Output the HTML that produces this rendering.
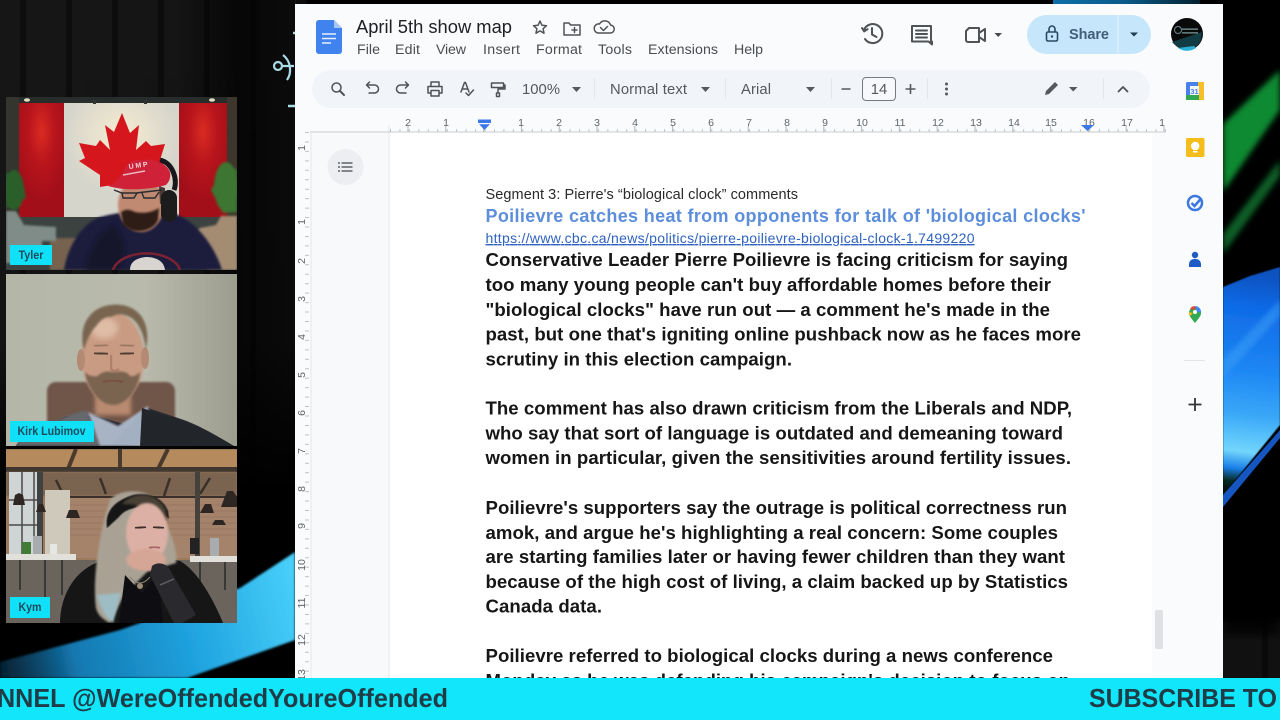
<!DOCTYPE html>
<html><head><meta charset="utf-8"><title>April 5th show map</title>
<style>
html,body{margin:0;padding:0;background:#000;width:1280px;height:720px;overflow:hidden}
svg{display:block;position:absolute;left:0;top:0}
text{font-family:"Liberation Sans",Arial,sans-serif}
.b{font-weight:700;font-size:18.6px;fill:#141414}
.m{font-size:14.2px;fill:#4a4d50}
.t{font-size:14.8px;fill:#55585c}
.r{font-size:10.5px;fill:#5f6368;text-anchor:middle}
.i{fill:none;stroke:#505356;stroke-width:1.500;stroke-linecap:round;stroke-linejoin:round}
.n{font-weight:700;font-size:11.500px;fill:#1b4b5c}
</style></head><body>
<svg width="1280" height="720" viewBox="0 0 1280 720">
<defs>
<pattern id="curt" width="46" height="10" patternUnits="userSpaceOnUse">
<rect width="46" height="10" fill="#131313"/>
<rect x="4" width="9" height="10" fill="#161616"/><rect x="20" width="6" height="10" fill="#0f0f0f"/><rect x="32" width="9" height="10" fill="#171717"/>
</pattern>
<linearGradient id="curfade" x1="0" y1="0" x2="0" y2="1"><stop offset="0" stop-color="#000" stop-opacity="0"/><stop offset=".6" stop-color="#000" stop-opacity=".1"/><stop offset=".88" stop-color="#000"/><stop offset="1" stop-color="#000"/></linearGradient>
<linearGradient id="curfadeR" x1="0" y1="0" x2="1" y2="0"><stop offset="0" stop-color="#000" stop-opacity="0"/><stop offset=".6" stop-color="#000" stop-opacity=".05"/><stop offset=".8" stop-color="#000" stop-opacity=".7"/><stop offset="1" stop-color="#000" stop-opacity=".5"/></linearGradient>
<linearGradient id="streak" gradientUnits="userSpaceOnUse" x1="0" y1="672" x2="295" y2="600"><stop offset="0" stop-color="#0c4a70" stop-opacity=".45"/><stop offset=".25" stop-color="#1478b0"/><stop offset=".65" stop-color="#20a4e0"/><stop offset="1" stop-color="#46cdf8"/></linearGradient>
<linearGradient id="topb" x1="0" x2="1" y1="0" y2="0"><stop offset="0" stop-color="#0c6fa8"/><stop offset=".5" stop-color="#0a5a88"/><stop offset="1" stop-color="#04202e"/></linearGradient>
<linearGradient id="blueR" gradientUnits="userSpaceOnUse" x1="1262" y1="275" x2="1236" y2="490"><stop offset="0" stop-color="#0b52c0"/><stop offset=".15" stop-color="#0f6ae6"/><stop offset=".45" stop-color="#1e88f4"/><stop offset=".65" stop-color="#3aa8f8"/><stop offset=".82" stop-color="#72d6fc"/><stop offset=".9" stop-color="#1a7fe8"/><stop offset=".96" stop-color="#062a22"/><stop offset="1" stop-color="#04140f"/></linearGradient>
<linearGradient id="wallK" x1="0" x2="1" y1="0" y2="0"><stop offset="0" stop-color="#b4b7a8"/><stop offset=".6" stop-color="#b9baac"/><stop offset="1" stop-color="#9c9d8e"/></linearGradient>
<radialGradient id="glow" cy=".3"><stop offset="0" stop-color="#f6ecd0"/><stop offset="1" stop-color="#d6d5cc"/></radialGradient>
<radialGradient id="redg" cy=".25" r=".6"><stop offset="0" stop-color="#d92b22"/><stop offset=".5" stop-color="#b8141c"/><stop offset="1" stop-color="#a30f19"/></radialGradient>
<filter id="f05"><feGaussianBlur stdDeviation=".35"/></filter>
<filter id="f07"><feGaussianBlur stdDeviation=".6"/></filter>
<filter id="f1"><feGaussianBlur stdDeviation="1"/></filter>
<filter id="f2"><feGaussianBlur stdDeviation="2.200"/></filter>
<filter id="f3"><feGaussianBlur stdDeviation="3"/></filter>
<filter id="f4"><feGaussianBlur stdDeviation="5"/></filter>
<clipPath id="cT"><rect x="6" y="97" width="231" height="173"/></clipPath>
<clipPath id="cK"><rect x="6" y="274" width="231" height="172"/></clipPath>
<clipPath id="cY"><rect x="6" y="449" width="231" height="174"/></clipPath>
<clipPath id="cDoc"><rect x="295" y="4" width="928" height="674"/></clipPath>
<clipPath id="cR"><rect x="1223" y="0" width="57" height="678"/></clipPath>
</defs>

<!-- backdrop -->
<rect width="1280" height="720" fill="#000"/>
<rect x="-10" y="-10" width="315" height="570" fill="url(#curt)" filter="url(#f3)"/>
<rect x="0" y="0" width="295" height="565" fill="url(#curfade)"/>
<rect x="0" y="0" width="295" height="565" fill="url(#curfadeR)"/>
<polygon points="0,662 120,630 240,588 295,552 295,640 187,678 0,678" fill="url(#streak)" filter="url(#f1)"/>
<!-- anchor-like glyph -->
<g fill="none" stroke="#a9dbe6" stroke-width="2.200" filter="url(#f05)">
<circle cx="278" cy="66" r="4"/><path d="M283 55c8 6 9 18 4 25M282 66h12"/><path d="M293 33h3M288 106h7" stroke-width="2.600"/>
</g>
<rect x="1053" y="0" width="147" height="4" fill="url(#topb)"/>
<rect x="1223" y="4" width="57" height="674" fill="#000"/>
<!-- right streaks -->
<g clip-path="url(#cR)">
<polygon points="1223,124 1280,70 1280,110 1223,192" fill="#0c8a33" filter="url(#f3)"/>
<polygon points="1223,234 1280,160 1280,176 1223,254" fill="#095e25" filter="url(#f3)"/>
<polygon points="1223,287 1250,276 1280,267 1280,425 1223,495" fill="url(#blueR)" filter="url(#f07)"/>
<polygon points="1223,360 1280,300 1280,316 1223,378" fill="#3da0f8" opacity=".5" filter="url(#f2)"/>
<polygon points="1223,495 1280,430 1280,438 1223,507" fill="#1657c0" filter="url(#f05)"/>
<rect x="1213" y="620" width="77" height="68" fill="url(#curt)" opacity=".8" filter="url(#f3)"/>
<rect x="1223" y="590" width="57" height="45" fill="#000" opacity=".8" filter="url(#f4)"/>
</g>

<!-- DOC WINDOW -->
<g clip-path="url(#cDoc)">
<rect x="295" y="4" width="928" height="674" fill="#f9fbfd"/>
<!-- doc icon -->
<path d="M319 20h15l8 8v23a3 3 0 0 1-3 3h-20a3 3 0 0 1-3-3V23a3 3 0 0 1 3-3z" fill="#3f83ee" filter="url(#f05)"/>
<path d="M334 20l8 8h-8z" fill="#a7c5f7"/>
<path d="M322 34h14M322 38.500h14M322 43h9" stroke="#e8f0fd" stroke-width="1.600"/>

<text x="356" y="33" font-size="18" fill="#202124" textLength="156" lengthAdjust="spacingAndGlyphs">April 5th show map</text>
<path class="i" d="M540 21l1.900 4.200 4.600.5-3.400 3 .9 4.500-4-2.300-4 2.300.9-4.500-3.400-3 4.600-.5z"/>
<path class="i" d="M564 23h5l1.500 2H580v10h-16zM572 30h5M574.500 27.500v5"/>
<path class="i" d="M598 33h12a4 4 0 0 0 .5-8 6 6 0 0 0-11-1 4.500 4.500 0 0 0-1.500 9zM600.500 27.500l3 3 4-4"/>

<text x="357" y="54" class="m" textLength="23">File</text>
<text x="395" y="54" class="m" textLength="25">Edit</text>
<text x="436" y="54" class="m" textLength="30">View</text>
<text x="483" y="54" class="m" textLength="37">Insert</text>
<text x="536" y="54" class="m" textLength="46">Format</text>
<text x="598" y="54" class="m" textLength="34">Tools</text>
<text x="648" y="54" class="m" textLength="70">Extensions</text>
<text x="734" y="54" class="m" textLength="29">Help</text>

<!-- right header icons -->
<path class="i" style="stroke-width:2" d="M864 30a9.500 9.500 0 1 1 1 9M862 28l2.200 3.400 3.400-2.200M872 28v6.500l4.500 2.500"/>
<path class="i" style="stroke-width:2" d="M912 26h19v15.500h1v3l-3.500-3H912zM916 30.500h11M916 34h11M916 37.500h11"/>
<path class="i" style="stroke-width:2" d="M969 28h10v14h-11a2 2 0 0 1-2-2v-9zM979 33l6-4v12l-6-4"/>
<polygon points="994.500,33 1002,33 998.200,37" fill="#474a4d"/>

<rect x="1027" y="15" width="124" height="39" rx="19.500" fill="#c6e6fb"/>
<rect x="1117.500" y="15" width="1" height="39" fill="#e6f4fd"/>
<g fill="none" stroke="#2a4a62" stroke-width="1.600"><rect x="1046.500" y="32" width="11" height="9" rx="1.500"/><path d="M1049 32v-3a3 3 0 0 1 6 0v3"/></g><circle cx="1052" cy="36.500" r="1.200" fill="#2a4a62"/>
<text x="1069" y="39" font-size="14.500" font-weight="700" fill="#33506a" textLength="40" opacity=".9">Share</text>
<polygon points="1130,32.500 1138,32.500 1134,36.500" fill="#1d3b52"/>

<circle cx="1187" cy="34" r="16" fill="#0a0a0a"/>
<path d="M1172 42l30-10-1 8a16 16 0 0 1-26 5z" fill="#123c44"/>
<path d="M1178 48a16 16 0 0 0 18 0l-2-2z" fill="#2bb0d8"/>
<path d="M1182 29h16M1182 33h16" stroke="#7d9a9e" stroke-width="1.500" filter="url(#f05)"/>
<circle cx="1178" cy="30" r="3.500" fill="none" stroke="#6b8a8e"/>

<!-- toolbar -->
<rect x="312" y="70" width="838" height="38" rx="19" fill="#f1f4f9"/>
<circle cx="336.500" cy="87.500" r="4.500" class="i"/><path class="i" style="stroke-width:2" d="M340 91l4 4"/>
<path class="i" d="M367 85h7.500a3.500 3.500 0 0 1 0 8H369M369.500 82l-3 3 3 3"/>
<path class="i" d="M408 85h-7.500a3.500 3.500 0 0 0 0 8H406M405.500 82l3 3-3 3"/>
<path class="i" d="M431 86v-4h8v4M431 93h-3v-6.500h14V93h-3M431 90.500h8V96h-8z"/>
<path class="i" d="M461 92l3.500-9.500h1L469 92M462.500 89h5.500M466 93l2.500 2.500 5-5.500"/>
<path class="i" d="M491.500 83h12v4.500h-12zM503.500 85h1.500v4h-7v4M496.500 93h3v3.500h-3z"/>
<text x="522" y="94" class="t" textLength="38">100%</text>
<polygon points="572,87 581,87 576.500,92" fill="#55585c"/>
<rect x="594" y="78" width="1" height="21" fill="#e3e6ea"/>
<text x="610" y="94" class="t" textLength="77">Normal text</text>
<polygon points="701,87 710,87 705.500,92" fill="#55585c"/>
<rect x="725" y="78" width="1" height="21" fill="#e3e6ea"/>
<text x="741" y="94" class="t" textLength="30">Arial</text>
<polygon points="806,87 815,87 810.500,92" fill="#55585c"/>
<rect x="831" y="78" width="1" height="21" fill="#e3e6ea"/>
<path d="M841.500 89h9M905.500 89h10M910.500 84v10" stroke="#55585c" stroke-width="1.600"/>
<rect x="862.500" y="77.500" width="33" height="23" rx="3.500" fill="#f6f8fb" stroke="#777b80"/>
<text x="879" y="94" class="t" text-anchor="middle">14</text>
<rect x="927" y="78" width="1" height="21" fill="#e3e6ea"/>
<circle cx="946.500" cy="84" r="1.500" fill="#55585c"/><circle cx="946.500" cy="89" r="1.500" fill="#55585c"/><circle cx="946.500" cy="94" r="1.500" fill="#55585c"/>
<path d="M1045 95l1-4 9-9 3 3-9 9z" fill="#55585c"/>
<polygon points="1069,87 1077.500,87 1073.200,91.500" fill="#55585c"/>
<rect x="1103" y="78" width="1" height="21" fill="#e3e6ea"/>
<path class="i" style="stroke-width:1.800" d="M1118.500 91.500l4.500-4.500 4.500 4.500"/>

<!-- page -->
<rect x="389" y="132" width="763" height="546" fill="#fff"/>
<rect x="311" y="132" width="78" height="546" fill="#f8f9fb"/>
<rect x="388.500" y="125" width="1" height="553" fill="#e3e6e9"/>
<rect x="1152" y="132" width="14" height="546" fill="#f9fbfd"/>
<rect x="1155" y="610" width="8" height="39" rx="2" fill="#dfe1e4"/>

<!-- ruler -->
<rect x="310" y="131.500" width="856" height="1" fill="#c9ccd0"/>
<line x1="390" y1="130.500" x2="1166" y2="130.500" stroke="#c0c3c7" stroke-width="3" stroke-dasharray="1 8.450"/>
<line x1="407.500" y1="129" x2="1166" y2="129" stroke="#b4b7ba" stroke-width="6" stroke-dasharray="1 36.800"/>
<text x="408" y="126" class="r">2</text><text x="446" y="126" class="r">1</text>
<text x="521" y="126" class="r">1</text><text x="559" y="126" class="r">2</text><text x="597" y="126" class="r">3</text><text x="635" y="126" class="r">4</text><text x="673" y="126" class="r">5</text><text x="711" y="126" class="r">6</text><text x="749" y="126" class="r">7</text><text x="787" y="126" class="r">8</text><text x="825" y="126" class="r">9</text><text x="862" y="126" class="r">10</text><text x="900" y="126" class="r">11</text><text x="938" y="126" class="r">12</text><text x="976" y="126" class="r">13</text><text x="1014" y="126" class="r">14</text><text x="1051" y="126" class="r">15</text><text x="1089" y="126" class="r">16</text><text x="1127" y="126" class="r">17</text><text x="1162" y="126" class="r">1</text>
<polygon points="478,119.500 491,119.500 491,123 484.500,130 478,123" fill="#3b78e7"/><rect x="478" y="123" width="13" height="1.200" fill="#fff"/>
<polygon points="1081,125 1094,125 1087.500,131" fill="#3b78e7"/>
<!-- vertical ruler -->
<line x1="307" y1="132" x2="307" y2="678" stroke="#c0c3c7" stroke-width="4" stroke-dasharray="1 8.450"/>
<rect x="310.500" y="132" width="1" height="546" fill="#e3e6e9"/>
<g transform="rotate(-90)">
<text x="-148" y="305" class="r">1</text><text x="-222" y="305" class="r">1</text><text x="-261" y="305" class="r">2</text><text x="-299" y="305" class="r">3</text><text x="-337" y="305" class="r">4</text><text x="-375" y="305" class="r">5</text><text x="-413" y="305" class="r">6</text><text x="-451" y="305" class="r">7</text><text x="-489" y="305" class="r">8</text><text x="-526" y="305" class="r">9</text><text x="-565" y="305" class="r">10</text><text x="-603" y="305" class="r">11</text><text x="-640" y="305" class="r">12</text><text x="-675" y="305" class="r">13</text>
</g>
<!-- outline btn -->
<circle cx="345.500" cy="167" r="18" fill="#eceef1"/>
<path d="M341.500 163h11M341.500 167h11M341.500 171h11" stroke="#5f6368" stroke-width="1.600"/><path d="M338 163h2M338 167h2M338 171h2" stroke="#5f6368" stroke-width="1.600"/>

<!-- side panel icons -->
<rect x="1186" y="82" width="18" height="18" rx="1.500" fill="#4a80ea"/><rect x="1198" y="82" width="6" height="18" fill="#f4bf28"/><rect x="1186" y="95" width="13" height="5" fill="#32a853"/><rect x="1190" y="86" width="9" height="9" fill="#f1f5fd"/>
<text x="1194.500" y="94" font-size="7.500" fill="#4a80ea" text-anchor="middle" font-weight="700">31</text>
<rect x="1186" y="138" width="18.500" height="19" rx="1.500" fill="#f5bd1c"/>
<circle cx="1195.200" cy="146" r="4.200" fill="#fff"/><rect x="1193" y="151" width="4.500" height="1.500" fill="#fff"/>
<circle cx="1195" cy="203" r="7" fill="none" stroke="#3a78e0" stroke-width="2.500"/><path d="M1191.500 203l3 3 7-8" fill="none" stroke="#3a78e0" stroke-width="2.500"/>
<circle cx="1195" cy="255" r="3.200" fill="#1f5bc4"/><path d="M1189 267v-3a5 5 0 0 1 5-5h2a5 5 0 0 1 5 5v3z" fill="#1f5bc4"/>
<path d="M1195 323c-4-5-6-7-6-10a6 6 0 0 1 12 0c0 3-2 5-6 10z" fill="#34a853"/>
<path d="M1190 309a6 6 0 0 1 5-3v4z" fill="#ea4335"/><path d="M1195 306a6 6 0 0 1 6 6l-4 0z" fill="#4285f4"/><path d="M1189 312a6 6 0 0 0 1 4l3-3z" fill="#fbbc04"/><circle cx="1195" cy="312" r="2" fill="#fff"/>
<rect x="1184" y="360" width="21" height="1" fill="#e3e5e8"/>
<path d="M1195 398v13M1188.500 404.500h13" stroke="#333" stroke-width="1.800"/>

<!-- document text -->
<g filter="url(#f05)">
<text x="485.500" y="199" font-size="14.500" fill="#2a2a2a" textLength="312.500">Segment 3: Pierre's “biological clock” comments</text>
<text x="485.500" y="222" font-size="18" font-weight="700" fill="#5b8edb" textLength="600">Poilievre catches heat from opponents for talk of 'biological clocks'</text>
<text x="485.500" y="243" font-size="14" fill="#2f62c0" text-decoration="underline" textLength="489">https://www.cbc.ca/news/politics/pierre-poilievre-biological-clock-1.7499220</text>
<text x="485.500" y="266" class="b" textLength="582.500">Conservative Leader Pierre Poilievre is facing criticism for saying</text>
<text x="485.500" y="291" class="b" textLength="565.500">too many young people can't buy affordable homes before their</text>
<text x="485.500" y="316" class="b" textLength="564.500">"biological clocks" have run out — a comment he's made in the</text>
<text x="485.500" y="340.500" class="b" textLength="595.500">past, but one that's igniting online pushback now as he faces more</text>
<text x="485.500" y="365.500" class="b" textLength="306.500">scrutiny in this election campaign.</text>
<text x="485.500" y="414.500" class="b" textLength="586.500">The comment has also drawn criticism from the Liberals and NDP,</text>
<text x="485.500" y="439.500" class="b" textLength="577.500">who say that sort of language is outdated and demeaning toward</text>
<text x="485.500" y="464" class="b" textLength="585.500">women in particular, given the sensitivities around fertility issues.</text>
<text x="485.500" y="514" class="b" textLength="581.500">Poilievre's supporters say the outrage is political correctness run</text>
<text x="485.500" y="539" class="b" textLength="572.500">amok, and argue he's highlighting a real concern: Some couples</text>
<text x="485.500" y="563" class="b" textLength="579.500">are starting families later or having fewer children than they want</text>
<text x="485.500" y="588" class="b" textLength="582.500">because of the high cost of living, a claim backed up by Statistics</text>
<text x="485.500" y="612.500" class="b" textLength="116.500">Canada data.</text>
<text x="485.500" y="662" class="b" textLength="567.500">Poilievre referred to biological clocks during a news conference</text>
<text x="485.500" y="687" class="b" textLength="584.500">Monday as he was defending his campaign's decision to focus on</text>
</g>
</g>

<!-- TYLER -->
<g clip-path="url(#cT)">
<rect x="6" y="97" width="231" height="173" fill="#262d2a"/>
<rect x="6" y="217" width="231" height="53" fill="#3c4240"/>
<rect x="50" y="238" width="40" height="32" fill="#76624f" filter="url(#f1)"/>
<rect x="19" y="103" width="45" height="114" fill="url(#redg)"/>
<rect x="64" y="103" width="115" height="114" fill="url(#glow)"/>
<rect x="179" y="103" width="48" height="114" fill="url(#redg)"/>
<rect x="227" y="97" width="10" height="120" fill="#3d362c"/>
<rect x="6" y="97" width="13" height="120" fill="#33352e"/>
<ellipse cx="27" cy="100" rx="3" ry="1.800" fill="#e6dcc0"/><ellipse cx="212" cy="100" rx="3" ry="1.800" fill="#e6dcc0"/>
<rect x="93" y="100" width="3" height="4" fill="#333"/><rect x="144" y="100" width="3" height="4" fill="#333"/>
<polygon points="122,113 130,133 139,125 136,150 146,141 151,146 165,144 160,160 165,163 150,175 150,187 125,183 100,187 100,175 79,161 85,158 79,143 96,146 100,140 110,150 105,125 114,132" fill="#d5171f" filter="url(#f05)"/>
<!-- sofas + plants -->
<path d="M6 211h10l8 14 32 2v14H42v22H6z" fill="#7f8c88" filter="url(#f1)"/>
<g filter="url(#f1)" fill="#2c5e2a"><ellipse cx="14" cy="190" rx="10" ry="20"/><path d="M6 172l18 14 2 12-20 10z"/></g>
<path d="M200 228l16-3 5-9h16v54h-30l-4-22h-14v-10z" fill="#a48c72" filter="url(#f1)"/>
<g filter="url(#f1)" fill="#3c7430"><ellipse cx="226" cy="187" rx="12" ry="25"/><path d="M211 190l15-26 11 6v42l-14 1z"/></g>
<!-- body -->
<path d="M64 270c3-20 15-45 36-53 30-8 55-8 78-2 22 10 38 35 44 55z" fill="#1b1f3e" filter="url(#f1)"/>
<path d="M85 270c5-24 15-40 30-45l10 20-5 25z" fill="#14162c" filter="url(#f2)"/>
<path d="M113 270a34 20 0 0 1 67 0" fill="none" stroke="#7a2233" stroke-width="2.500"/>
<path d="M130 270c0-8 6-12 16-13 10 0 18 4 19 13z" fill="#d8d4d0" filter="url(#f05)"/>
<!-- head -->
<ellipse cx="141" cy="205" rx="23" ry="27" fill="#c08a72" filter="url(#f1)"/>
<path d="M121 212c6-4 10-2 14 0 9 2 18 0 24-4l-1 12c-5 13-28 15-35 4z" fill="#2e1a14" filter="url(#f1)"/>
<path d="M159 186l6 2v14l-5 2z" fill="#4a3a34" filter="url(#f05)"/>
<g fill="none" stroke="#2a2b30" stroke-width="1.400"><path d="M114 190l8 3h14l26-3"/><path d="M122 193l1 5h11l3-5M142 193l2 5h11l4-6"/></g>
<!-- headset -->
<path d="M160 160c13 3 18 20 14 30" fill="none" stroke="#18181c" stroke-width="5"/>
<rect x="161" y="190" width="16" height="32" rx="8" fill="#1a1a1f" filter="url(#f05)"/>
<!-- hat -->
<path d="M108 186c18-6 14-26 30-26 14-2 28 2 32 12 1 6-1 10-4 13-18 5-42 6-58 1z" fill="#cf2337" filter="url(#f05)"/>
<text x="129" y="169" font-size="7" font-weight="700" fill="#efd6da" textLength="19" transform="rotate(-8 129 169)">UMP</text>
<path d="M123 175l22-4" stroke="#e9b8c0" stroke-width="1.500"/>
<rect x="10" y="245" width="42" height="20" fill="#10e0f8"/>
<text x="18.500" y="259" class="n" textLength="25" lengthAdjust="spacingAndGlyphs">Tyler</text>
</g>

<!-- KIRK -->
<g clip-path="url(#cK)">
<rect x="6" y="274" width="231" height="172" fill="url(#wallK)"/>
<rect x="47" y="382" width="128" height="60" rx="9" fill="#6f5548" filter="url(#f1)"/>
<path d="M16 446c6-12 38-22 50-30l30 0 28 8 24-16 36 12c16 6 30 14 50 26z" fill="#2a2c30" filter="url(#f05)"/>
<path d="M16 446c6-12 38-22 50-30l20-6 16 36z" fill="#65686c" filter="url(#f1)"/>
<path d="M88 412l30 14 30-20 3 40H100z" fill="#a8b4c4" filter="url(#f1)"/>
<path d="M112 444l30-32 6 2 2 32z" fill="#a2b0c2"/>
<path d="M142 408l24 8c26 6 50 20 68 30H140z" fill="#24262a" filter="url(#f05)"/>
<!-- head -->
<rect x="95" y="385" width="36" height="30" fill="#b98a70" filter="url(#f2)"/>
<ellipse cx="113" cy="358" rx="31" ry="46" fill="#c99b82" filter="url(#f1)"/>
<ellipse cx="81" cy="360" rx="4" ry="11" fill="#b58a74"/><ellipse cx="145" cy="358" rx="4" ry="11" fill="#b58a74"/>
<ellipse cx="104" cy="328" rx="14" ry="11" fill="#dfbca6" filter="url(#f3)"/>
<path d="M84 350c-6-22 4-42 26-45 26-3 42 14 36 44-2-14-6-24-13-30-8-6-16-6-22-2-4-1-10 2-14 8-6 6-10 14-13 25z" fill="#79654f" filter="url(#f1)"/>
<path d="M85 372c2 16 14 33 28 33s26-16 27-33c-4 4-8 5-10 4-2-4-8-5-16-4-8-1-13 0-16 4-4 1-10 0-13-4z" fill="#7a6450" filter="url(#f1)"/>
<path d="M94 353l14 1M120 354l14-1" stroke="#4f3d32" stroke-width="2.200" fill="none" filter="url(#f05)"/>
<path d="M94 346l14-1M120 345l14 1" stroke="#8d7059" stroke-width="1.800" fill="none" filter="url(#f07)"/>
<path d="M111 355v14q4 4 8 0" stroke="#a87a64" stroke-width="2" fill="none" filter="url(#f07)"/>
<path d="M103 382q10-3 20 0" stroke="#7c4f44" stroke-width="2" fill="none" filter="url(#f05)"/>
<rect x="10" y="421" width="84" height="21" fill="#10e0f8"/>
<text x="17.500" y="435" class="n" textLength="68" lengthAdjust="spacingAndGlyphs">Kirk Lubimov</text>
</g>

<!-- KYM -->
<g clip-path="url(#cY)">
<rect x="6" y="449" width="231" height="174" fill="#9e7a5c"/>
<rect x="6" y="450" width="231" height="20" fill="#b58a5c" filter="url(#f05)"/>
<path d="M76 449l-8 20M120 449v20M168 449l-10 20" stroke="#4a3a2e" stroke-width="4"/>
<rect x="6" y="467" width="231" height="5" fill="#403630"/>
<rect x="6" y="472" width="231" height="24" fill="#7a6450" filter="url(#f1)"/>
<path d="M56 480l8 16M100 478l6 16M170 478l-6 18M210 478l-10 16" stroke="#3a2f2a" stroke-width="2.500"/>
<rect x="56" y="496" width="181" height="2" fill="#3a2f2a"/>
<rect x="70" y="498" width="167" height="60" fill="#a5826a" filter="url(#f05)"/>
<g stroke="#8a6a55" stroke-width=".8" opacity=".6"><path d="M70 505h167M70 511h167M70 517h167M70 523h167M70 529h167M70 535h167"/></g>
<rect x="45" y="490" width="25" height="70" fill="#cfc9bb" filter="url(#f05)"/>
<rect x="9" y="472" width="34" height="85" fill="#cfd4d4" filter="url(#f05)"/>
<path d="M22 472v85M34 472v85M9 500h34M9 525h34" stroke="#4a4a48" stroke-width="1.500"/>
<rect x="37" y="472" width="6" height="90" fill="#3f4240"/>
<rect x="195" y="472" width="5" height="90" fill="#45423e"/>
<path d="M13 505h12l-2-10-4-2-4 2zM36 512h10l-3-8h-4zM66 518h14l-3-8h-8zM200 513h14l-3-9h-6zM221 507h16v-10l-4-6h-6zM212 525h14l-3-5h-8z" fill="#2e2623"/>
<rect x="6" y="560" width="231" height="63" fill="#6a645c"/>
<rect x="6" y="554" width="70" height="6" fill="#e2e0da"/>
<rect x="190" y="556" width="47" height="6" fill="#e2e0da"/>
<path d="M20 560v30M45 560v38M62 560v35M200 562v30M225 562v28" stroke="#333" stroke-width="1.800"/>
<rect x="22" y="542" width="9" height="12" fill="#3f7c34" filter="url(#f05)"/>
<rect x="33" y="536" width="9" height="18" fill="#a9acae" filter="url(#f05)"/><rect x="50" y="544" width="7" height="10" fill="#e6e6e2"/>
<rect x="190" y="538" width="9" height="16" fill="#222"/><rect x="210" y="538" width="9" height="18" fill="#a8acae"/>
<!-- person -->
<path d="M60 623c0-24 12-50 36-60 20-8 60-8 84-2 18 10 34 40 43 62z" fill="#121218" filter="url(#f05)"/>
<path d="M110 500c-10 28-18 80-14 108 2 8 8 12 14 15l14-28 24-24 28-8c2-10-4-28-12-44l-12-22c-8-8-34-8-42 3z" fill="#a9a294" filter="url(#f1)"/>
<path d="M97 595c4 14 8 22 16 28l8-30z" fill="#9dbcc4" filter="url(#f1)"/>
<path d="M107 528c-2-14 4-26 26-33 18-3 30 4 35 16l1 8c-12-14-40-16-50-2z" fill="#141416" filter="url(#f07)"/>
<path d="M122 504c12-14 36-12 44 6l1 12c-14-16-34-18-45-18z" fill="#4a3f36" filter="url(#f1)"/>
<ellipse cx="147" cy="533" rx="21" ry="30" fill="#dcb0a4" filter="url(#f1)"/>
<ellipse cx="146" cy="560" rx="20" ry="11" fill="#d5a595" filter="url(#f1)"/>
<path d="M135 528l11-1M153 527l11 1" stroke="#3a2d2a" stroke-width="2" filter="url(#f05)"/>
<path d="M149 548q6-2 11 0" stroke="#a66" stroke-width="2" fill="none" filter="url(#f05)"/>
<path d="M125 575l17 18 16-20 5 50h-44z" fill="#0e0e12"/>
<path d="M130 577q10 12 20 0" fill="none" stroke="#8a7f74" stroke-width="1"/><circle cx="140" cy="586" r="3" fill="#9a8a78"/>
<!-- mic -->
<path d="M152 566c4-4 14-4 18 4l26 45-14 8h-8l-24-48z" fill="#2b2b2f" filter="url(#f05)"/>
<path d="M160 585l14-6" stroke="#5a5a60" stroke-width="1.500"/>
<rect x="10" y="597" width="40" height="21" fill="#10e0f8"/>
<text x="18.500" y="611" class="n" textLength="23" lengthAdjust="spacingAndGlyphs">Kym</text>
</g>

<!-- TICKER -->
<rect x="0" y="678" width="1280" height="42" fill="#11e6fb"/>
<text x="-3" y="707" font-size="26" font-weight="700" fill="#1f3c47" textLength="451" lengthAdjust="spacingAndGlyphs">NNEL @WereOffendedYoureOffended</text>
<text x="1089" y="707" font-size="26" font-weight="700" fill="#1f3c47" textLength="188" lengthAdjust="spacingAndGlyphs">SUBSCRIBE TO</text>
</svg>
</body></html>
